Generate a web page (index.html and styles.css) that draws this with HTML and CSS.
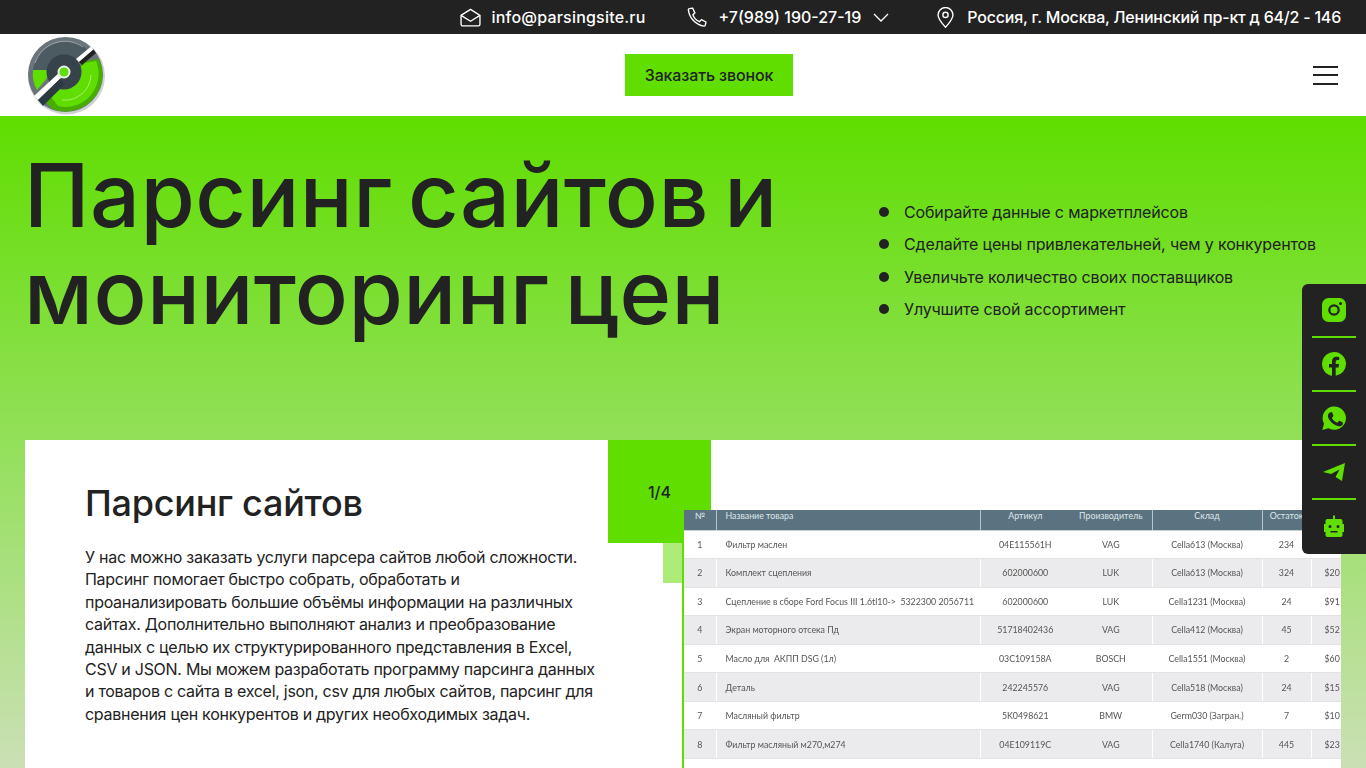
FILE: index.html
```html
<!DOCTYPE html>
<html lang="ru">
<head>
<meta charset="utf-8">
<title>Парсинг сайтов и мониторинг цен</title>
<link rel="stylesheet" href="styles.css">
</head>
<body>
<div class="topbar">
  <a class="top-item t-mail">
    <svg class="ti" viewBox="0 0 20 20" fill="none" stroke="#fff" stroke-width="1.3" stroke-linejoin="round"><path d="M1 8 10 2.200 19 8v8.500a1.500 1.500 0 0 1-1.500 1.500h-15A1.500 1.500 0 0 1 1 16.500Z"/><path d="M1 8l9 5.600L19 8"/></svg>
    info@parsingsite.ru
  </a>
  <a class="top-item t-phone">
    <svg class="ti" viewBox="0 0 20 20" fill="none" stroke="#fff" stroke-width="1.3" stroke-linejoin="round"><path d="M2.200 1.600 5.300 1l2.200 4.600-1.900 1.700c.9 2.700 3.400 5.400 6.300 6.700l1.800-2 4.400 2.300-.7 3c-.2.600-.7 1-1.300.9C8.800 17.500 2.300 10.500 1.300 2.900c-.1-.6.300-1.200.9-1.300Z"/></svg>
    +7(989) 190-27-19
    <svg class="chev" viewBox="0 0 16 9" fill="none" stroke="#fff" stroke-width="1.3"><path d="M1 1l7 7 7-7"/></svg>
  </a>
  <a class="top-item t-addr">
    <svg class="ti" viewBox="0 0 20 20" fill="none" stroke="#fff" stroke-width="1.3"><path d="M10 19.300C6 14.800 2.900 11.500 2.900 7.600a7.100 7.100 0 0 1 14.200 0c0 3.900-3.100 7.200-7.100 11.700Z"/><circle cx="10" cy="7.500" r="2.500"/></svg>
    Россия, г. Москва, Ленинский пр-кт д 64/2 - 146
  </a>
</div>

<header class="header">
  <svg class="logo" viewBox="0 0 80 80">
    <circle cx="41.500" cy="41" r="38.500" fill="#ced2d4"/>
    <circle cx="40.500" cy="39.500" r="37.500" fill="#6a757b"/>
    <path d="M74 24A37 37 0 0 1 27 74L20 66 60 26Z" fill="#47ad00"/>
    <path d="M71 26A33 33 0 0 1 33 71L26 62 60 28Z" fill="#5fde00"/>
    <path d="M8 35 22 35 22 43 12 55A32 32 0 0 1 8 35Z" fill="#5fde00"/>
    <path d="M8 35A33 33 0 0 1 64 16L40 38 22 35Z" fill="#4c5a61"/>
    <circle cx="39" cy="37" r="17.500" fill="#36434a"/>
    <path d="M10 28A31.500 31.500 0 0 1 58 12" fill="none" stroke="#c5cacc" stroke-width=".6"/>
    <path d="M66 40A26 26 0 0 1 37 65" fill="none" stroke="#d8f5c4" stroke-width=".6"/>
    <path d="M51 24 66 11.500l2.500 3L54 27Z" fill="#fff"/>
    <path d="M54 27 68.500 14.500l2.500 3.500L57 30Z" fill="#222"/>
    <path d="M9 61 36 36l3.500 3.500L13 65Z" fill="#fff"/>
    <path d="M13 65 35 44l5 5L18 71Z" fill="#2b3a42"/>
    <circle cx="39" cy="37" r="6.500" fill="#e8efe3"/>
    <circle cx="39" cy="37" r="4.500" fill="#5fde00"/>
  </svg>
  <a class="order-btn">Заказать звонок</a>
  <button class="burger" aria-label="Меню"><span></span><span></span><span></span></button>
</header>

<main class="hero">
  <section class="hero-top">
    <h1 class="hero-title">Парсинг сайтов и мониторинг цен</h1>
    <ul class="hero-list">
      <li>Собирайте данные с маркетплейсов</li>
      <li>Сделайте цены привлекательней, чем у конкурентов</li>
      <li>Увеличьте количество своих поставщиков</li>
      <li>Улучшите свой ассортимент</li>
    </ul>
  </section>

  <section class="card">
    <div class="card-text">
      <h2 class="card-title">Парсинг сайтов</h2>
      <p class="card-body">У нас можно заказать услуги парсера сайтов любой сложности. Парсинг помогает быстро собрать, обработать и проанализировать большие объёмы информации на различных сайтах. Дополнительно выполняют анализ и преобразование данных с целью их структурированного представления в Excel, CSV и JSON. Мы можем разработать программу парсинга данных и товаров с сайта в excel, json, csv для любых сайтов, парсинг для сравнения цен конкурентов и других необходимых задач.</p>
    </div>
    <div class="badge">1/4</div>
    <div class="badge-light"></div>
    <div class="table-wrap">
      <table class="goods">
        <thead>
          <tr><th class="c-n">№</th><th class="c-name">Название товара</th><th class="c-art">Артикул</th><th class="c-man">Производитель</th><th class="c-st">Склад</th><th class="c-q">Остаток</th><th class="c-p"></th></tr>
        </thead>
        <tbody>
          <tr><td>1</td><td class="l">Фильтр маслен</td><td>04E115561H</td><td>VAG</td><td>Cella613 (Москва)</td><td>234</td><td class="p"></td></tr>
          <tr><td>2</td><td class="l">Комплект сцепления</td><td>602000600</td><td>LUK</td><td>Cella613 (Москва)</td><td>324</td><td class="p">$20</td></tr>
          <tr><td>3</td><td class="l">Сцепление в сборе Ford Focus III 1.6tl10-&gt;&nbsp; 5322300 2056711</td><td>602000600</td><td>LUK</td><td>Cella1231 (Москва)</td><td>24</td><td class="p">$91</td></tr>
          <tr><td>4</td><td class="l">Экран моторного отсека Пд</td><td>51718402436</td><td>VAG</td><td>Cella412 (Москва)</td><td>45</td><td class="p">$52</td></tr>
          <tr><td>5</td><td class="l">Масло для&nbsp; АКПП DSG (1л)</td><td>03C109158A</td><td>BOSCH</td><td>Cella1551 (Москва)</td><td>2</td><td class="p">$60</td></tr>
          <tr><td>6</td><td class="l">Деталь</td><td>242245576</td><td>VAG</td><td>Cella518 (Москва)</td><td>24</td><td class="p">$15</td></tr>
          <tr><td>7</td><td class="l">Масляный фильтр</td><td>5K0498621</td><td>BMW</td><td>Germ030 (Загран.)</td><td>7</td><td class="p">$10</td></tr>
          <tr><td>8</td><td class="l">Фильтр масляный м270,м274</td><td>04E109119C</td><td>VAG</td><td>Cella1740 (Калуга)</td><td>445</td><td class="p">$23</td></tr>
        </tbody>
      </table>
    </div>
  </section>
</main>

<aside class="social">
  <a class="soc"><svg viewBox="0 0 24 24"><path fill="#5fde00" fill-rule="evenodd" d="M6.500 0h11A6.500 6.500 0 0 1 24 6.500v11a6.500 6.500 0 0 1-6.500 6.500h-11A6.500 6.500 0 0 1 0 17.500v-11A6.500 6.500 0 0 1 6.500 0Zm5.500 6.200a5.800 5.800 0 1 0 0 11.600 5.800 5.800 0 0 0 0-11.600Zm0 2.200a3.600 3.600 0 1 1 0 7.200 3.600 3.600 0 0 1 0-7.200ZM18.500 3.900a1.500 1.500 0 1 0 0 3 1.500 1.500 0 0 0 0-3Z"/></svg></a>
  <a class="soc"><svg viewBox="0 0 24 24"><path fill="#5fde00" d="M24 12a12 12 0 1 0-14 11.850V15.500H7V12h3V9.400c0-3 1.800-4.700 4.500-4.700 1.300 0 2.700.25 2.700.25v2.950h-1.500c-1.500 0-2 .9-2 1.900V12h3.350l-.55 3.500h-2.800v8.350A12 12 0 0 0 24 12Z"/></svg></a>
  <a class="soc"><svg viewBox="0 0 24 24"><path fill="#5fde00" fill-rule="evenodd" d="M.3 24l1.700-6.200A11.700 11.700 0 1 1 6.400 22.300ZM8.200 6.400c-.3 0-.7.100-1 .5-.4.400-1.300 1.300-1.300 3.100s1.300 3.600 1.500 3.800c.2.300 2.600 4 6.300 5.500 3.100 1.200 3.700 1 4.400.9.700-.1 2.200-.9 2.500-1.800.3-.9.300-1.600.2-1.800-.1-.2-.3-.3-.7-.5l-2.400-1.200c-.4-.1-.6-.2-.9.200l-1.100 1.400c-.2.200-.4.300-.8.100-.4-.2-1.500-.6-2.900-1.800-1.100-1-1.800-2.100-2-2.500-.2-.4 0-.6.200-.8l.8-1c.2-.2.2-.4.300-.6.100-.2.100-.5 0-.7l-1.100-2.600c-.3-.7-.6-.6-.8-.6Z"/></svg></a>
  <a class="soc"><svg viewBox="0 0 24 24"><path fill="#5fde00" d="M23 3 20 21 13.500 17 17.500 9.500 9 14 1 12Z"/></svg></a>
  <a class="soc"><svg viewBox="0 0 24 24"><path fill="#5fde00" fill-rule="evenodd" d="M11 .5h2v3.500h5.500a2 2 0 0 1 2 2V9H22v8h-1.500v3a2 2 0 0 1-2 2h-13a2 2 0 0 1-2-2v-3H2V9h1.500V6a2 2 0 0 1 2-2H11ZM8 10a1.500 1.500 0 1 0 0 3 1.500 1.500 0 0 0 0-3Zm8 0a1.500 1.500 0 1 0 0 3 1.500 1.500 0 0 0 0-3ZM8.500 16v1.500h7V16Z"/></svg></a>
</aside>
</body>
</html>
```
FILE: styles.css
```css
* { box-sizing: border-box; }
html, body { margin: 0; height: 768px; overflow: hidden; }
body { font-family: Inter, "Open Sans", sans-serif; color: #222; background: #fff; display: flex; flex-direction: column; }
.topbar { height: 34px; flex: none; background: #222; color: #fff; display: flex; justify-content: flex-end; align-items: center; padding-right: 25px; font-size: 16px; font-weight: 500; }
.top-item { display: flex; align-items: center; gap: 11px; white-space: nowrap; }
.t-mail { letter-spacing: .2px; }
.t-phone { margin-left: 41px; letter-spacing: 0; }
.t-addr { margin-left: 46px; letter-spacing: -.22px; }
.ti { width: 21px; height: 21px; flex: none; }
.chev { width: 16px; height: 9px; margin-left: 1px; }
.header { height: 82px; flex: none; background: #fff; display: flex; align-items: center; justify-content: space-between; padding: 0 28px 0 25px; }
.logo { width: 80px; height: 80px; }
.order-btn { width: 168px; height: 42px; background: #5fde00; display: flex; align-items: center; justify-content: center; font-size: 16px; font-weight: 500; letter-spacing: -.13px; color: #222; }
.burger { width: 25px; height: 19px; padding: 0; border: 0; background: none; display: flex; flex-direction: column; justify-content: space-between; }
.burger span { height: 2px; background: #222; display: block; }
.hero { flex: 1; min-height: 0; background: linear-gradient(#5fde00 0, #93e05a 50%, #cbe0b5 100%); padding: 0 25px; display: flex; flex-direction: column; }
.hero-top { height: 324px; flex: none; display: flex; }
.hero-title { margin: 31px 0 0 -1px; width: 831px; font-size: 88px; line-height: 97px; font-weight: 500; letter-spacing: .44px; word-spacing: -8.500px; }
.hero-list { list-style: none; margin: 80px 0 0 24px; padding: 0; font-size: 16px; line-height: 32.300px; letter-spacing: -.14px; }
.hero-list li { position: relative; padding-left: 25px; white-space: nowrap; }
.hero-list li::before { content: ""; position: absolute; left: 0; top: 11px; width: 10px; height: 10px; border-radius: 50%; background: #222; }
.card { position: relative; flex: 1; background: #fff; display: flex; }
.card-text { width: 575px; padding: 41px 0 0 60px; flex: none; }
.card-title { margin: 0; font-size: 36px; line-height: 44px; font-weight: 500; letter-spacing: -.25px; }
.card-body { margin: 21px 0 0; font-size: 16px; line-height: 22.400px; letter-spacing: -.28px; }
.badge { position: absolute; left: 583px; top: 0; width: 103px; height: 103px; background: #5fde00; display: flex; align-items: center; justify-content: center; font-size: 16px; font-weight: 500; }
.badge-light { position: absolute; left: 638px; top: 103px; width: 20px; height: 40px; background: #aeec7a; }
.table-wrap { position: absolute; left: 657px; top: 70px; right: 0; bottom: 0; border-left: 2px solid #5fde00; overflow: hidden; background: #fff; }
.goods { border-collapse: collapse; table-layout: fixed; width: 657px; font-family: Lato, "Open Sans", sans-serif; font-size: 8.800px; color: #555; filter: blur(.25px); }
.goods th { height: 20px; background: #5b7380; color: #dfe6ea; font-weight: 400; vertical-align: top; padding: 0; border-right: 1px solid #b9c5cb; border-bottom: 1px solid #c8d0d4; }
.goods td { height: 28.550px; text-align: center; padding: 0; border-right: 1px solid #fff; border-bottom: 1px solid #e2e3e5; white-space: nowrap; overflow: hidden; }
.goods tbody tr:nth-child(even) td { background: #ebebed; }
.goods .l, .goods .c-name { text-align: left; padding-left: 9px; }
.goods .p { text-align: left; padding-left: 13px; }
.goods td:nth-child(3), .goods th:nth-child(3) { border-right: 0; }
.c-n { width: 32px; } .c-name { width: 264px; } .c-art { width: 90px; } .c-man { width: 82px; } .c-st { width: 110px; } .c-q { width: 49px; } .c-p { width: 30px; }
.social { position: fixed; right: 0; top: 284px; width: 64px; height: 270px; background: #222; border-radius: 6px 0 0 6px; padding: 0 10px; display: flex; flex-direction: column; z-index: 5; }
.soc { height: 54px; flex: none; display: flex; align-items: center; justify-content: center; border-bottom: 2px solid #5fde00; }
.soc:last-child { border-bottom: 0; }
.soc svg { width: 24px; height: 24px; }
```
